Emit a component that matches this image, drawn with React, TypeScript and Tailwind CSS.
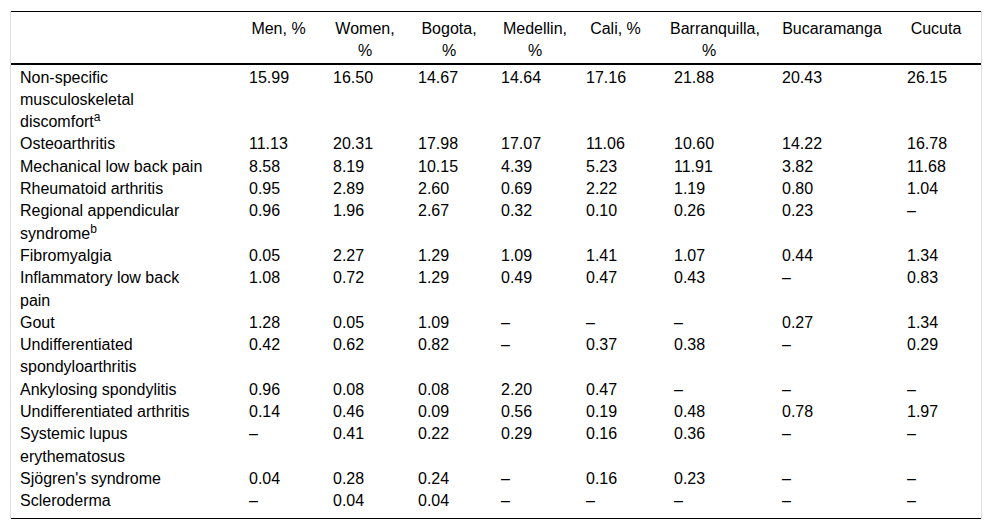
const rows: { label: React.ReactNode; values: string[] }[] = [
  { label: <>Non-specific musculoskeletal discomfort<sup>a</sup></>, values: ['15.99', '16.50', '14.67', '14.64', '17.16', '21.88', '20.43', '26.15'] },
  { label: 'Osteoarthritis', values: ['11.13', '20.31', '17.98', '17.07', '11.06', '10.60', '14.22', '16.78'] },
  { label: 'Mechanical low back pain', values: ['8.58', '8.19', '10.15', '4.39', '5.23', '11.91', '3.82', '11.68'] },
  { label: 'Rheumatoid arthritis', values: ['0.95', '2.89', '2.60', '0.69', '2.22', '1.19', '0.80', '1.04'] },
  { label: <>Regional appendicular syndrome<sup>b</sup></>, values: ['0.96', '1.96', '2.67', '0.32', '0.10', '0.26', '0.23', '–'] },
  { label: 'Fibromyalgia', values: ['0.05', '2.27', '1.29', '1.09', '1.41', '1.07', '0.44', '1.34'] },
  { label: 'Inflammatory low back pain', values: ['1.08', '0.72', '1.29', '0.49', '0.47', '0.43', '–', '0.83'] },
  { label: 'Gout', values: ['1.28', '0.05', '1.09', '–', '–', '–', '0.27', '1.34'] },
  { label: 'Undifferentiated spondyloarthritis', values: ['0.42', '0.62', '0.82', '–', '0.37', '0.38', '–', '0.29'] },
  { label: 'Ankylosing spondylitis', values: ['0.96', '0.08', '0.08', '2.20', '0.47', '–', '–', '–'] },
  { label: 'Undifferentiated arthritis', values: ['0.14', '0.46', '0.09', '0.56', '0.19', '0.48', '0.78', '1.97'] },
  { label: 'Systemic lupus erythematosus', values: ['–', '0.41', '0.22', '0.29', '0.16', '0.36', '–', '–'] },
  { label: "Sjögren's syndrome", values: ['0.04', '0.28', '0.24', '–', '0.16', '0.23', '–', '–'] },
  { label: 'Scleroderma', values: ['–', '0.04', '0.04', '–', '–', '–', '–', '–'] },
];

// header cells: label + padding so the centred text sits where the reference has it
const headers = [
  { text: 'Men, %', cls: 'pl-[9px] pr-[16px]' },
  { text: 'Women, %', cls: 'pl-[9px] pr-[12px]' },
  { text: 'Bogota, %', cls: 'pl-[9px] pr-[12px]' },
  { text: 'Medellin, %', cls: 'pl-[9px] pr-[8px]' },
  { text: 'Cali, %', cls: 'pl-[9px] pr-[20px]' },
  { text: 'Barranquilla, %', cls: 'pl-[5px] pr-[25px]' },
  { text: 'Bucaramanga', cls: 'pl-[9px] pr-[16px]' },
  { text: 'Cucuta', cls: 'pl-[9px] pr-[16px]' },
];

const colWidths = ['w-[229px]', 'w-[84px]', 'w-[85px]', 'w-[83px]', 'w-[85px]', 'w-[88px]', 'w-[108px]', 'w-[125px]', 'w-[83px]'];

export default function App() {
  return (
    <div className="bg-white min-h-[531px] pt-[11px] pl-[10px] font-['Liberation_Sans',Arial,sans-serif] text-[16px] leading-[22.3px] text-black">
      <div className="w-[972px] border-x border-[#dedede]">
        <table className="w-full table-fixed border-separate border-spacing-0">
          <colgroup>
            {colWidths.map((w, i) => (
              <col key={i} className={w} />
            ))}
          </colgroup>
          <thead>
            <tr>
              <th className="border-t border-b-2 border-black pt-[6px] pb-0 pl-[9px]" />
              {headers.map((h) => (
                <th
                  key={h.text}
                  className={`border-t border-b-2 border-black pt-[6px] pb-0 text-center align-top font-normal ${h.cls}`}
                >
                  {h.text}
                </th>
              ))}
            </tr>
          </thead>
          <tbody>
            {rows.map((r, i) => {
              const first = i === 0;
              const last = i === rows.length - 1;
              const pad = `${first ? 'pt-[2px]' : 'pt-0'} ${last ? 'pb-[5px] border-b border-black' : 'pb-0'}`;
              return (
                <tr key={i}>
                  <td className={`align-top pl-[9px] pr-[32px] text-left ${pad}`}>{r.label}</td>
                  {r.values.map((v, j) => (
                    <td key={j} className={`align-top pl-[9px] pr-[4px] text-left ${pad}`}>
                      {v}
                    </td>
                  ))}
                </tr>
              );
            })}
          </tbody>
        </table>
      </div>
    </div>
  );
}
